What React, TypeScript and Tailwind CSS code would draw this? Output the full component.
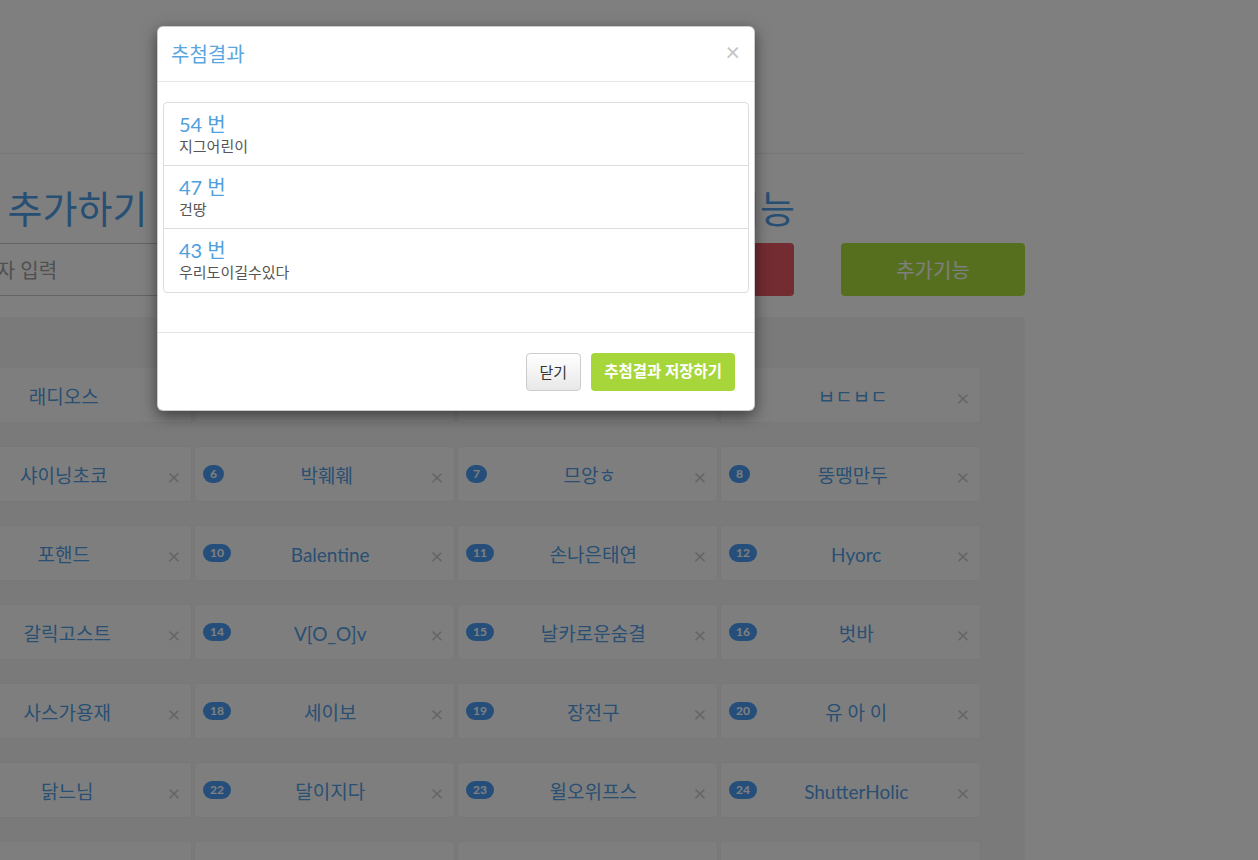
import React from 'react';

const names = [
  '래디오스', '다크엘프', '청풍명월', 'ㅂㄷㅂㄷ',
  '샤이닝초코', '박훼훼', '므앙ㅎ', '뚱땡만두',
  '포핸드', 'Balentine', '손나은태연', 'Hyorc',
  '갈릭고스트', 'V[O_O]v', '날카로운숨결', '벗바',
  '사스가용재', '세이보', '장전구', '유 아 이',
  '닭느님', '달이지다', '윌오위프스', 'ShutterHolic',
  '지그어린이', '건땅', '우리도이길수있다', '하늘바라기',
];

const results = [
  { no: 54, name: '지그어린이' },
  { no: 47, name: '건땅' },
  { no: 43, name: '우리도이길수있다' },
];

function MemberCard({ no, name }: { no: number; name: string }) {
  return (
    <div className="h-[56px] bg-[#fdfdfd] border border-[#f0f0f0] rounded-[3px] flex items-center">
      <span className="ml-[8px] h-[18px] min-w-[21px] px-[7px] rounded-full bg-[#4a9ff5] text-white text-[12px] font-bold leading-[18px] text-center">
        {no}
      </span>
      <span className="flex-1 mt-[3px] text-center text-[19px] leading-[24px] text-[#529fe6] whitespace-nowrap">{name}</span>
      <span className="w-[24px] pl-[1px] mt-[6px] text-[22px] leading-[22px] text-[#cbcbcb]">×</span>
    </div>
  );
}

export default function App() {
  return (
    <div className="relative w-[1258px] h-[860px] overflow-hidden bg-white font-['Lato','Noto_Sans_CJK_KR',sans-serif]">
      {/* page behind the modal */}
      <div className="w-[1170px] -ml-[145px] pt-[153px]">
        <div className="border-t border-[#eeeeee]" />

        <div className="flex gap-[15px] mt-[32px]">
          <div className="w-[740px]">
            <h2 className="pl-[38px] h-[44px] text-[38px] leading-[44px] text-[#4f9ee6] whitespace-nowrap">참가자 추가하기</h2>
            <div className="mt-[13px] ml-[92px] h-[53px] border border-[#c8c8c8] rounded-[4px] flex items-center pl-[12px] text-[20px] text-[#a0a0a0]">
              참가자 입력
            </div>
          </div>
          <div className="w-[415px]">
            <h2 className="pl-[45px] h-[44px] text-[38px] leading-[44px] text-[#4f9ee6] whitespace-nowrap">추첨기능</h2>
            <div className="mt-[13px] flex gap-[47px]">
              <button className="w-[184px] h-[53px] rounded-[4px] bg-[#e95866] text-white text-[20px]">초기화</button>
              <button className="w-[184px] h-[53px] rounded-[4px] bg-[#acde3e] text-white text-[20px]">추가기능</button>
            </div>
          </div>
        </div>

        <div className="mt-[21px] rounded-[4px] bg-[#f5f5f5] pt-[50px] pl-[76px] pr-[45px] pb-[30px]">
          <div className="grid grid-cols-[repeat(4,260.5px)] gap-x-[2.5px] gap-y-[23px]">
            {names.map((n, i) => (
              <MemberCard key={i} no={i + 1} name={n} />
            ))}
          </div>
        </div>
      </div>

      {/* backdrop */}
      <div className="absolute inset-0 bg-black/50" />

      {/* modal */}
      <div className="absolute left-[157px] top-[26px] w-[598px] bg-white rounded-[6px] border border-black/20 shadow-[0_5px_15px_rgba(0,0,0,0.5)]">
        <div className="h-[55px] border-b border-[#e5e5e5] pl-[13px] pr-[15px] flex items-center justify-between">
          <h4 className="text-[20px] leading-[26px] text-[#5aa6df]">추첨결과</h4>
          <span className="text-[25px] leading-[25px] text-[#c4c4c4] -mr-[1px] -mt-[5px]">×</span>
        </div>

        <div className="pt-[20px] px-[5px] pb-[19px]">
          <div className="mb-[20px] border border-[#dddddd] rounded-[4px] divide-y divide-[#dddddd]">
            {results.map((r) => (
              <div key={r.no} className="h-[63px] px-[15px] pt-[9px]">
                <div className="text-[20px] leading-[24px] text-[#4ea0e0]">{r.no} 번</div>
                <div className="text-[15px] leading-[20px] text-[#555555]">{r.name}</div>
              </div>
            ))}
          </div>
        </div>

        <div className="border-t border-[#e5e5e5] pt-[20px] pb-[19px] pr-[19px] flex justify-end gap-[10px]">
          <button className="h-[38px] px-[13px] rounded-[4px] border border-[#cccccc] bg-gradient-to-b from-white to-[#e8e8e8] text-[15px] text-[#333333]">
            닫기
          </button>
          <button className="h-[38px] px-[13px] rounded-[4px] bg-[#a6d63a] text-[15.5px] font-bold text-white">
            추첨결과 저장하기
          </button>
        </div>
      </div>
    </div>
  );
}
